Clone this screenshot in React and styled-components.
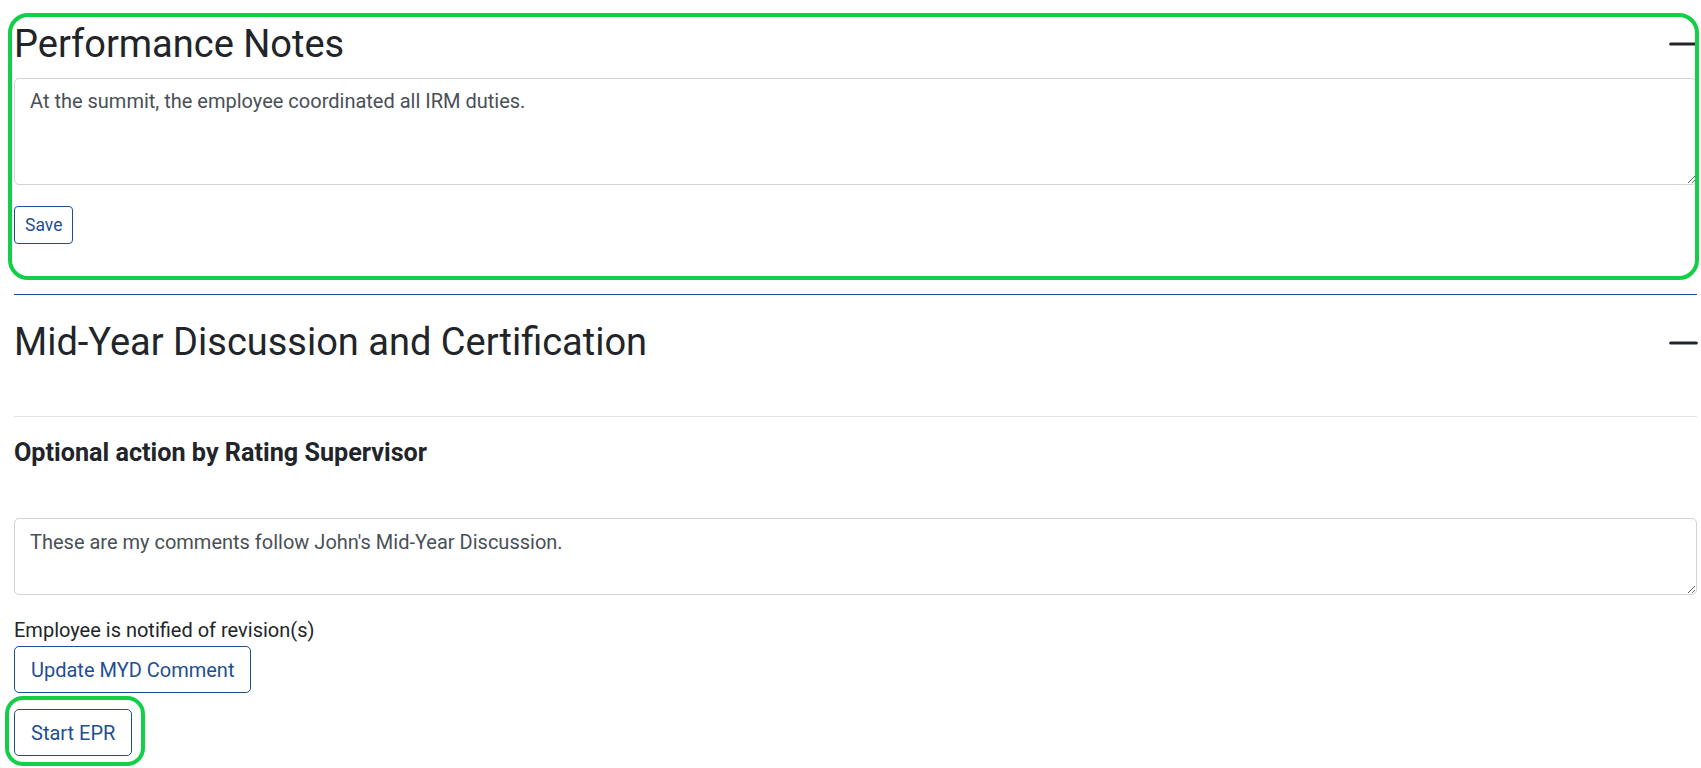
import React, { useState } from 'react'
import styled, { createGlobalStyle } from 'styled-components'

const GlobalStyle = createGlobalStyle`
  html, body {
    margin: 0;
    padding: 0;
    background: #fff;
    font-family: Roboto, "Liberation Sans", Arial, sans-serif;
    font-size: 20px;
    color: #212529;
  }
`

const Page = styled.div`
  padding: 21.5px 4px 14px 14px;
`

const Section = styled.section`
  position: relative;
  padding-bottom: ${p => p.$padBottom || 0}px;
`

// green annotation ring that lies over the content
const Highlight = styled.div`
  position: absolute;
  top: ${p => p.$t}px;
  right: ${p => p.$r}px;
  bottom: ${p => p.$b}px;
  left: ${p => p.$l}px;
  border: 4px solid #13cf48;
  border-radius: ${p => p.$radius || 20}px;
  pointer-events: none;
`

const HeaderRow = styled.div`
  display: flex;
  align-items: center;
  justify-content: space-between;
  margin-bottom: ${p => p.$gap || 0}px;
`

const Title = styled.h2`
  margin: 0;
  font-size: 38px;
  font-weight: 400;
  line-height: 1.2;
  color: #212529;
`

const Collapse = styled.button`
  display: flex;
  align-items: center;
  padding: 0;
  margin-right: -1px;
  border: none;
  background: none;
  cursor: pointer;
`

const SubTitle = styled.h5`
  margin: 0;
  font-size: 25.2px;
  font-weight: 700;
  line-height: 1.2;
  color: #212529;
`

const Notes = styled.textarea`
  display: block;
  box-sizing: border-box;
  width: 100%;
  height: ${p => p.$rows * 30 + 17}px;
  margin-top: ${p => p.$top || 0}px;
  padding: 7.5px 15px;
  border: 1px solid #ced4da;
  border-radius: 5px;
  font-family: inherit;
  font-size: 20px;
  line-height: 1.5;
  color: #495057;
  resize: vertical;
  outline: none;
`

const Button = styled.button`
  display: block;
  box-sizing: border-box;
  padding: ${p => (p.$small ? '5px 10px' : '7.5px 16px')};
  font-family: inherit;
  font-size: ${p => (p.$small ? '17.5px' : '20px')};
  line-height: 1.5;
  color: #1f4f91;
  background: #fff;
  border: 1px solid #1f4f91;
  border-radius: ${p => (p.$small ? 4 : 5)}px;
  cursor: pointer;
`

const ButtonSpot = styled.div`
  position: relative;
  align-self: flex-start;
  margin-top: ${p => p.$top || 0}px;
`

const Rule = styled.hr`
  margin: ${p => p.$top}px 0 ${p => p.$bottom}px;
  border: none;
  border-top: 1px solid ${p => p.$color};
`

const Label = styled.div`
  margin-top: 20px;
  line-height: 1.5;
  font-size: 20px;
  color: #212529;
`

const Stack = styled.div`
  display: flex;
  flex-direction: column;
  align-items: flex-start;
`

const Minus = () => (
  <svg width="29" height="6" viewBox="0 0 29 6">
    <line x1="1.75" y1="3" x2="27.25" y2="3" stroke="#212529" strokeWidth="3.2" strokeLinecap="round" />
  </svg>
)

export default function App() {
  const [notes, setNotes] = useState('At the summit, the employee coordinated all IRM duties.')
  const [myd, setMyd] = useState("These are my comments follow John's Mid-Year Discussion.")

  return (
    <Page>
      <GlobalStyle />
      <Section $padBottom={32}>
        <HeaderRow $gap={10.5}>
          <Title>Performance Notes</Title>
          <Collapse aria-label="collapse"><Minus /></Collapse>
        </HeaderRow>
        <Notes $rows={3} value={notes} onChange={e => setNotes(e.target.value)} />
        <Stack>
          <ButtonSpot $top={21}>
            <Button $small>Save</Button>
          </ButtonSpot>
        </Stack>
        <Highlight $t={-8.5} $l={-6} $r={-2} $b={-4} />
      </Section>

      <Rule $color="#1d4d8e" $top={18} $bottom={25} />

      <Section>
        <HeaderRow>
          <Title>Mid-Year Discussion and Certification</Title>
          <Collapse aria-label="collapse"><Minus /></Collapse>
        </HeaderRow>
        <Rule $color="#e3e4e6" $top={50.5} $bottom={21.5} />
        <SubTitle>Optional action by Rating Supervisor</SubTitle>
        <Notes $top={49.5} $rows={2} value={myd} onChange={e => setMyd(e.target.value)} />
        <Label>Employee is notified of revision(s)</Label>
        <Stack>
          <ButtonSpot $top={1}>
            <Button>Update MYD Comment</Button>
          </ButtonSpot>
          <ButtonSpot $top={16}>
            <Button>Start EPR</Button>
            <Highlight $t={-13} $l={-9} $r={-13} $b={-10} $radius={18} />
          </ButtonSpot>
        </Stack>
      </Section>
    </Page>
  )
}
